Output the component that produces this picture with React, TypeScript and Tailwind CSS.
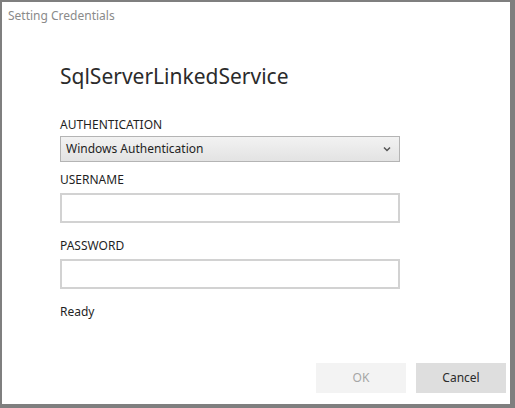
import React from 'react';

const Field: React.FC<{ label: string; className?: string }> = ({ label, className }) => (
  <div className={className}>
    <div className="text-[12px] leading-[16px] text-[#1f1f1f]">{label}</div>
    <input
      type="text"
      className="mt-[5px] block h-[30px] w-[340px] border-2 border-[#d2d2d2] bg-white outline-none"
    />
  </div>
);

export default function App() {
  return (
    <div className="h-[408px] w-[515px] bg-white">
      <div
        className="flex h-full w-full flex-col border-b-[4px] border-l-2 border-r-[5px] border-t-2 border-[#7f7f7f] bg-white"
        style={{ fontFamily: '"Noto Sans", "Open Sans", sans-serif' }}
      >
        <div className="pl-[6px] pt-[6px] text-[12px] leading-[16px] text-[#8a8a8a]">Setting Credentials</div>

        <div className="flex flex-1 flex-col pl-[58px]">
          <h1 className="mt-[38px] text-[21px] leading-[28px] text-[#2b2b2b]">SqlServerLinkedService</h1>

          <div className="mt-[27px] text-[12px] leading-[16px] text-[#1f1f1f]">AUTHENTICATION</div>
          <div className="mt-[3px] flex h-[26px] w-[340px] items-center justify-between border border-[#b4b4b4] bg-gradient-to-b from-[#f2f2f2] to-[#e3e3e3] pl-[5px] pr-[8px]">
            <span className="text-[12px] text-[#1f1f1f]">Windows Authentication</span>
            <svg width="8" height="6" viewBox="0 0 8 6">
              <path d="M1 1.5 L4 4.5 L7 1.5" fill="none" stroke="#555" strokeWidth="1.5" />
            </svg>
          </div>

          <Field label="USERNAME" className="mt-[10px]" />
          <Field label="PASSWORD" className="mt-[15px]" />

          <div className="mt-[15px] text-[12px] leading-[16px] text-[#1f1f1f]">Ready</div>

          <div className="mt-auto mb-[11px] flex justify-end gap-[10px] pr-[4px]">
            <button className="h-[30px] w-[90px] bg-[#f3f3f3] text-[12px] text-[#a6a6a6]">OK</button>
            <button className="h-[30px] w-[90px] bg-[#dedede] text-[12px] text-[#2b2b2b]">Cancel</button>
          </div>
        </div>
      </div>
    </div>
  );
}
